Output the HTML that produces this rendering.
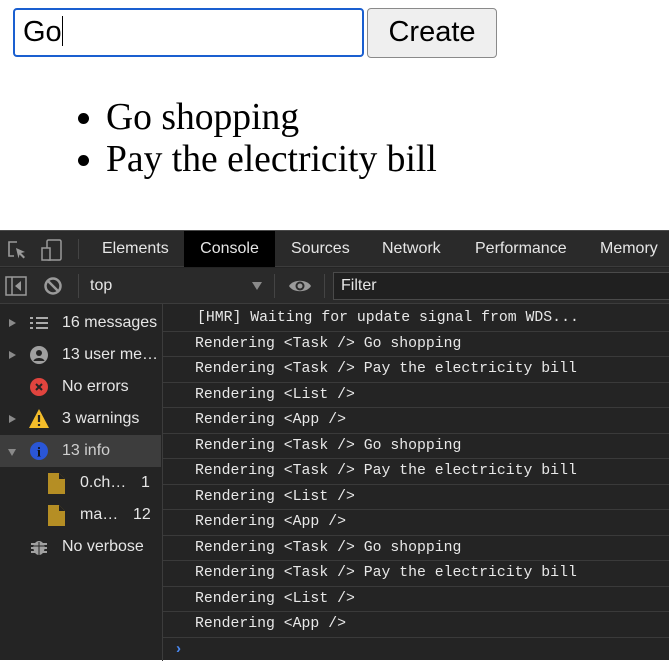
<!DOCTYPE html>
<html><head><style>
*{margin:0;padding:0;box-sizing:border-box}
body{width:669px;height:660px;background:#fff;position:relative;overflow:hidden;font-family:"Liberation Sans",sans-serif}
.inp{position:absolute;left:13px;top:8px;width:351px;height:49px;border:2px solid #1a5fd0;border-radius:4px;font-size:29px;padding:6px 0 0 8px;color:#000}
.caret{display:inline-block;width:1px;height:30px;background:#000;vertical-align:-5px}
.btn{position:absolute;left:367px;top:8px;width:130px;height:50px;border:1px solid #8a8a8a;border-radius:4px;background:#efefef;font-size:29px;text-align:center;line-height:47px}
ul{position:absolute;left:106px;top:97px;font-family:"Liberation Serif",serif;font-size:37.6px;line-height:42px}
.dt{position:absolute;left:0;top:230px;width:669px;height:430px;background:#242424;border-top:1px solid #4a4a4a}
.tabs{position:absolute;top:0;left:0;width:669px;height:36px;background:#2a2a2a;border-bottom:1px solid #3c3c3c;color:#e6e6e6;font-size:16px}
.tab{position:absolute;top:0;height:36px;line-height:36px}
.tb{position:absolute;top:37px;left:0;width:669px;height:36px;background:#2a2a2a;border-bottom:1px solid #3c3c3c;color:#e6e6e6;font-size:16px}
.side{position:absolute;top:76px;left:0;width:162px;height:354px;color:#e6e6e6;font-size:16px}
.sl{position:absolute;top:73px;left:162px;width:1px;height:357px;background:#3c3c3c}
.sr{position:absolute;left:0;width:161px;height:32px;line-height:32px}
.con{position:absolute;top:75px;left:163px;right:0;font-family:"Liberation Mono",monospace;font-size:14.8px;color:#e8e8e8}
.cr{height:25.5px;line-height:25px;border-bottom:1px solid #3a3a3a;padding-left:32px;white-space:pre}
.ar{position:absolute;left:9px;top:12px;width:0;height:0;border-left:7px solid #8a8a8a;border-top:4.5px solid transparent;border-bottom:4.5px solid transparent}
.vs{position:absolute;width:1px;background:#444}
</style></head><body>
<div class="inp">Go<span class="caret"></span></div>
<div class="btn">Create</div>
<ul><li>Go shopping</li><li>Pay the electricity bill</li></ul>
<div class="dt">
<div class="tabs">
<svg style="position:absolute;left:6px;top:8px" width="22" height="22" viewBox="0 0 22 22"><path d="M11 3H3v14h5" fill="none" stroke="#9a9a9a" stroke-width="1.6"/><path d="M10 9l9 4-4 1 4 4-1.5 1.5-4-4-1 4z" fill="#9a9a9a"/></svg>
<svg style="position:absolute;left:40px;top:7px" width="24" height="24" viewBox="0 0 24 24"><rect x="7" y="2" width="14" height="20" rx="1.5" fill="none" stroke="#9a9a9a" stroke-width="1.5"/><rect x="2" y="10" width="8" height="12" fill="#2a2a2a" stroke="#9a9a9a" stroke-width="1.5"/></svg>
<div class="vs" style="left:78px;top:8px;height:20px"></div>
<div class="tab" style="left:102px">Elements</div>
<div class="tab" style="left:184px;width:91px;background:#000;text-align:center">Console</div>
<div class="tab" style="left:291px">Sources</div>
<div class="tab" style="left:382px">Network</div>
<div class="tab" style="left:475px">Performance</div>
<div class="tab" style="left:600px">Memory</div>
</div>
<div class="tb">
<svg style="position:absolute;left:5px;top:8px" width="22" height="20" viewBox="0 0 22 20"><rect x="1" y="1" width="20" height="18" fill="none" stroke="#9a9a9a" stroke-width="1.5"/><path d="M7 1v18" stroke="#9a9a9a" stroke-width="1.5"/><path d="M16 5v10l-6-5z" fill="#9a9a9a"/></svg>
<svg style="position:absolute;left:43px;top:8px" width="20" height="20" viewBox="0 0 20 20"><circle cx="10" cy="10" r="7.5" fill="none" stroke="#9a9a9a" stroke-width="2.5"/><path d="M5 5l10 10" stroke="#9a9a9a" stroke-width="2.5"/></svg>
<div class="vs" style="left:78px;top:6px;height:24px"></div>
<div style="position:absolute;left:90px;top:0;line-height:36px">top</div>
<div style="position:absolute;left:252px;top:14px;border-top:8px solid #8a8a8a;border-left:5px solid transparent;border-right:5px solid transparent"></div>
<div class="vs" style="left:274px;top:6px;height:24px"></div>
<svg style="position:absolute;left:288px;top:10px" width="24" height="16" viewBox="0 0 24 16"><path d="M1 8C5 1 19 1 23 8C19 15 5 15 1 8z" fill="#9a9a9a"/><circle cx="12" cy="8" r="4.5" fill="#2a2a2a"/><circle cx="12" cy="8" r="2.5" fill="#9a9a9a"/></svg>
<div class="vs" style="left:324px;top:6px;height:24px"></div>
<div style="position:absolute;left:333px;top:4px;width:340px;height:28px;border:1px solid #4a4a4a;background:#202020;line-height:26px;padding-left:7px">Filter</div>
</div>
<div class="sl"></div>
<div class="side">
<div class="sr" style="top:0"><span class="ar"></span><svg style="position:absolute;left:30px;top:9px" width="18" height="14"><path d="M0 2h3M0 7h3M0 12h3M6 2h12M6 7h12M6 12h12" stroke="#aaa" stroke-width="2"/></svg><span style="position:absolute;left:62px">16 messages</span></div>
<div class="sr" style="top:32px"><span class="ar"></span><svg style="position:absolute;left:30px;top:7px" width="18" height="18"><circle cx="9" cy="9" r="9" fill="#a0a0a0"/><circle cx="9" cy="7" r="3" fill="#242424"/><path d="M3.5 15c1-4 10-4 11 0" fill="#242424"/></svg><span style="position:absolute;left:62px">13 user me…</span></div>
<div class="sr" style="top:64px"><svg style="position:absolute;left:30px;top:7px" width="18" height="18"><circle cx="9" cy="9" r="9" fill="#e0443e"/><path d="M6 6l6 6M12 6l-6 6" stroke="#242424" stroke-width="2"/></svg><span style="position:absolute;left:62px">No errors</span></div>
<div class="sr" style="top:96px"><span class="ar"></span><svg style="position:absolute;left:29px;top:6px" width="20" height="19"><path d="M10 0L20 19H0z" fill="#f4bd2a"/><path d="M10 6v7M10 15v2" stroke="#242424" stroke-width="2.2"/></svg><span style="position:absolute;left:62px">3 warnings</span></div>
<div class="sr" style="top:128px;background:#3d3d3d"><span class="ar" style="left:8px;top:14px;border-left:4.5px solid transparent;border-right:4.5px solid transparent;border-top:7px solid #8a8a8a;border-bottom:0"></span><svg style="position:absolute;left:30px;top:7px" width="18" height="18"><circle cx="9" cy="9" r="9" fill="#2a56d6"/><text x="9" y="14.5" font-family="Liberation Serif" font-weight="bold" font-size="14" fill="#111" text-anchor="middle">i</text></svg><span style="position:absolute;left:62px;color:#cfcfcf">13 info</span></div>
<div class="sr" style="top:160px"><svg style="position:absolute;left:48px;top:6px" width="17" height="21"><path d="M0 0h11l6 6v15H0z" fill="#b58e24"/><path d="M11 0l6 6h-6z" fill="#222"/></svg><span style="position:absolute;left:80px">0.ch…</span><span style="position:absolute;left:141px">1</span></div>
<div class="sr" style="top:192px"><svg style="position:absolute;left:48px;top:6px" width="17" height="21"><path d="M0 0h11l6 6v15H0z" fill="#b58e24"/><path d="M11 0l6 6h-6z" fill="#222"/></svg><span style="position:absolute;left:80px">ma…</span><span style="position:absolute;left:133px">12</span></div>
<div class="sr" style="top:224px"><svg style="position:absolute;left:30px;top:7px" width="18" height="18"><ellipse cx="9" cy="10" rx="5.5" ry="7" fill="#a0a0a0"/><path d="M1 6h16M1 10h16M1 14h16" stroke="#a0a0a0" stroke-width="2"/><path d="M4 8h10" stroke="#242424" stroke-width="1"/><path d="M9 4v14" stroke="#242424" stroke-width="1"/></svg><span style="position:absolute;left:62px">No verbose</span></div>
</div>
<div class="con">
<div class="cr" style="padding-left:34px">[HMR] Waiting for update signal from WDS...</div>
<div class="cr">Rendering &lt;Task /&gt; Go shopping</div>
<div class="cr">Rendering &lt;Task /&gt; Pay the electricity bill</div>
<div class="cr">Rendering &lt;List /&gt;</div>
<div class="cr">Rendering &lt;App /&gt;</div>
<div class="cr">Rendering &lt;Task /&gt; Go shopping</div>
<div class="cr">Rendering &lt;Task /&gt; Pay the electricity bill</div>
<div class="cr">Rendering &lt;List /&gt;</div>
<div class="cr">Rendering &lt;App /&gt;</div>
<div class="cr">Rendering &lt;Task /&gt; Go shopping</div>
<div class="cr">Rendering &lt;Task /&gt; Pay the electricity bill</div>
<div class="cr">Rendering &lt;List /&gt;</div>
<div class="cr">Rendering &lt;App /&gt;</div>
<div style="padding-left:11px;line-height:24px;color:#4a8af4;font-weight:bold">›</div>
</div>
</div>
</body></html>
